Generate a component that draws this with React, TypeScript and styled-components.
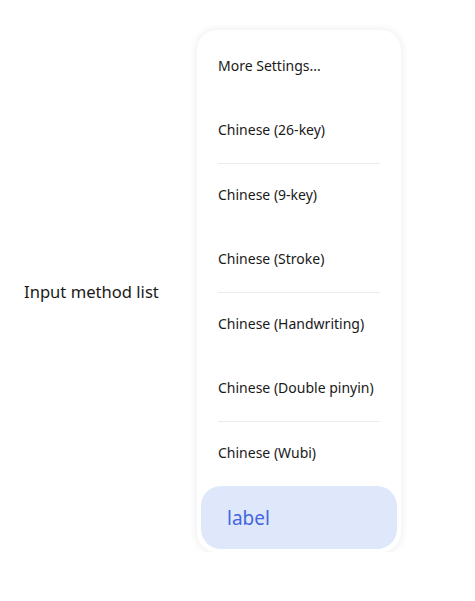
import { Fragment } from "react";
import styled, { createGlobalStyle } from "styled-components";

const methods = [
  { label: "More Settings...", divider: false },
  { label: "Chinese (26-key)", divider: true },
  { label: "Chinese (9-key)", divider: false },
  { label: "Chinese (Stroke)", divider: true },
  { label: "Chinese (Handwriting)", divider: false },
  { label: "Chinese (Double pinyin)", divider: true },
  { label: "Chinese (Wubi)", divider: false },
];

export default function App() {
  return (
    <>
      <GlobalStyle />
      <Page>
        <Caption>Input method list</Caption>
        <Panel>
          {methods.map((m) => (
            <Fragment key={m.label}>
              <Item>{m.label}</Item>
              {m.divider && <Divider />}
            </Fragment>
          ))}
          <LabelButton>label</LabelButton>
        </Panel>
      </Page>
    </>
  );
}

/* ============ styled-components ============ */

const GlobalStyle = createGlobalStyle`
  html, body {
    margin: 0;
    padding: 0;
    background: #ffffff;
    font-family: "Noto Sans", "Liberation Sans", sans-serif;
  }
`;

const Page = styled.div`
  width: 475px;
  height: 601px;
  box-sizing: border-box;
  padding: 30px 0 0 24px;
  display: flex;
  align-items: center;
  align-content: flex-start;
  height: 552px;
`;

const Caption = styled.div`
  width: 173px;
  font-size: 16.6px;
  color: #1a1a1a;
`;

const Panel = styled.div`
  width: 204px;
  height: 522px;
  box-sizing: border-box;
  padding: 5px 4px 3px 4px;
  background: #ffffff;
  border-radius: 20px;
  box-shadow: 0 0 10px rgba(0, 0, 0, 0.09);
  display: flex;
  flex-direction: column;
`;

const Item = styled.div`
  height: 64px;
  box-sizing: border-box;
  padding: 0 0 4px 17px;
  flex-shrink: 0;
  display: flex;
  align-items: center;
  font-size: 14px;
  color: #191919;
  white-space: nowrap;
`;

const Divider = styled.div`
  height: 1px;
  flex-shrink: 0;
  margin: 0 17px;
  background: #ececec;
`;

const LabelButton = styled.div`
  margin-top: auto;
  height: 63px;
  flex-shrink: 0;
  display: flex;
  align-items: center;
  padding-left: 26px;
  border-radius: 20px;
  background: #dfe8fb;
  color: #4466e0;
  font-size: 19px;
`;
